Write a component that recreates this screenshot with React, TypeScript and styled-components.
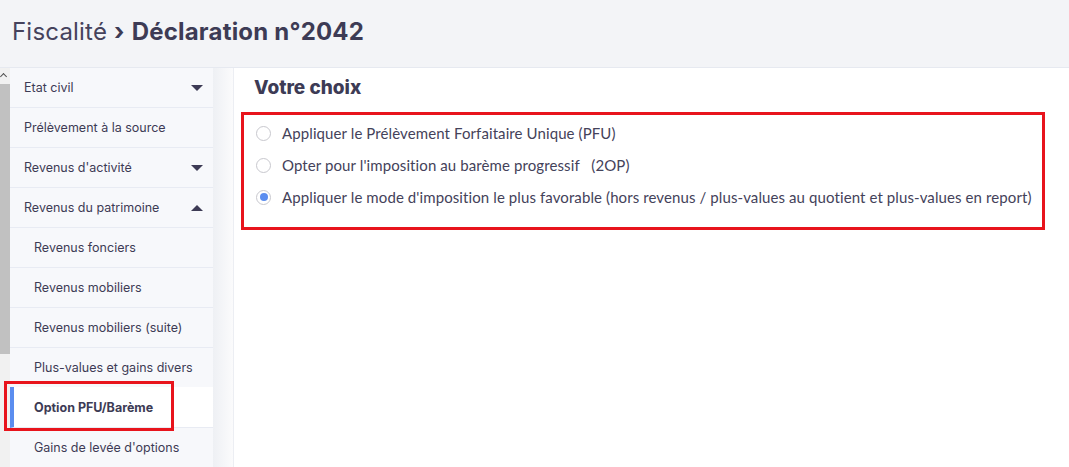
import React from "react";
import styled, { createGlobalStyle, css } from "styled-components";

const GlobalStyle = createGlobalStyle`
  html, body {
    margin: 0;
    padding: 0;
    height: 100%;
    overflow: hidden;
    background: #ffffff;
  }
  * { box-sizing: border-box; }
`;

const ink = "#3d3b55";
const heading = `"Inter", "Noto Sans", sans-serif`;
const body = `"Lato", "Open Sans", sans-serif`;

type Item = { label: string; sub?: boolean; caret?: "down" | "up"; active?: boolean };

const items: Item[] = [
  { label: "Etat civil", caret: "down" },
  { label: "Prélèvement à la source" },
  { label: "Revenus d'activité", caret: "down" },
  { label: "Revenus du patrimoine", caret: "up" },
  { label: "Revenus fonciers", sub: true },
  { label: "Revenus mobiliers", sub: true },
  { label: "Revenus mobiliers (suite)", sub: true },
  { label: "Plus-values et gains divers", sub: true },
  { label: "Option PFU/Barème", sub: true, active: true },
  { label: "Gains de levée d'options", sub: true },
];

const options = [
  { label: "Appliquer le Prélèvement Forfaitaire Unique (PFU)" },
  { label: "Opter pour l'imposition au barème progressif\u00a0\u00a0\u00a0(2OP)" },
  {
    label:
      "Appliquer le mode d'imposition le plus favorable (hors revenus / plus-values au quotient et plus-values en report)",
    checked: true,
  },
];

export default function App() {
  return (
    <>
      <GlobalStyle />
      <Page>
        <Header>
          <Title>
            <Crumb>Fiscalité</Crumb>
            <Sep>›</Sep>
            <Current>Déclaration n°2042</Current>
          </Title>
        </Header>
        <Body>
          <ScrollTrack>
            <ScrollArrow />
            <ScrollThumb />
          </ScrollTrack>
          <Sidebar>
            {items.map((it) => (
              <NavItem key={it.label} $sub={it.sub} $active={it.active}>
                <span>{it.label}</span>
                {it.caret && <Caret $up={it.caret === "up"} />}
                {it.active && <Highlight />}
              </NavItem>
            ))}
          </Sidebar>
          <Gutter />
          <Content>
            <SectionTitle>Votre choix</SectionTitle>
            <OptionBox>
              {options.map((o) => (
                <Option key={o.label}>
                  <Radio $checked={o.checked} />
                  <span>{o.label}</span>
                </Option>
              ))}
            </OptionBox>
          </Content>
        </Body>
      </Page>
    </>
  );
}

const Page = styled.div`
  display: flex;
  flex-direction: column;
  height: 467px;
  color: ${ink};
`;

const Header = styled.header`
  height: 68px;
  flex: none;
  background: #f3f4f7;
  border-bottom: 1px solid #e6e9f0;
  display: flex;
  align-items: center;
  padding: 0 12px 4px;
`;

const Title = styled.h1`
  margin: 0;
  font-family: ${heading};
  font-size: 24px;
  letter-spacing: 0.2px;
  display: flex;
  align-items: baseline;
  gap: 7px;
`;

const Crumb = styled.span`
  font-weight: 400;
  color: #45425c;
`;

const Sep = styled.span`
  font-weight: 700;
`;

const Current = styled.span`
  font-weight: 700;
`;

const Body = styled.div`
  flex: 1;
  display: flex;
  min-height: 0;
  background: #f3f4f7;
`;

const ScrollTrack = styled.div`
  width: 10px;
  flex: none;
  background: #f1f1f1;
  display: flex;
  flex-direction: column;
`;

const ScrollArrow = styled.div`
  height: 16px;
  background: #f1f1f1;
  position: relative;
  &::before {
    content: "";
    position: absolute;
    left: 1px;
    top: 6px;
    width: 4px;
    height: 4px;
    border-left: 1.5px solid #505050;
    border-top: 1.5px solid #505050;
    transform: rotate(45deg);
  }
`;

const ScrollThumb = styled.div`
  height: 270px;
  background: #c1c1c1;
`;

const Sidebar = styled.nav`
  width: 203px;
  flex: none;
  background: #f7f8fb;
  display: flex;
  flex-direction: column;
`;

const NavItem = styled.div<{ $sub?: boolean; $active?: boolean }>`
  position: relative;
  height: 40px;
  flex: none;
  display: flex;
  align-items: center;
  justify-content: space-between;
  padding: 0 10px 0 ${(p) => (p.$sub ? 24 : 14)}px;
  border-bottom: 1px solid #e8ebf3;
  font-family: ${heading};
  font-size: 12.5px;
  color: ${ink};
  ${(p) =>
    p.$active &&
    css`
      background: #ffffff;
      font-weight: 700;
      border-left: 4px solid #5b8def;
      padding-left: 20px;
      margin-top: -1px;
      height: 41px;
    `}
`;

const Caret = styled.span<{ $up?: boolean }>`
  width: 0;
  height: 0;
  border-left: 6px solid transparent;
  border-right: 6px solid transparent;
  ${(p) =>
    p.$up
      ? css`border-bottom: 6px solid #3d3b55;`
      : css`border-top: 6px solid #3d3b55;`}
`;

const Highlight = styled.span`
  position: absolute;
  left: -10px;
  top: -6px;
  width: 170px;
  height: 50px;
  border: 3px solid #e8141c;
  pointer-events: none;
`;

const Gutter = styled.div`
  width: 20px;
  flex: none;
  background: linear-gradient(to right, #eef0f4, #fbfbfc);
`;

const Content = styled.main`
  flex: 1;
  background: #ffffff;
  border-left: 1px solid #eceef3;
  padding: 8px 23px 0 20px;
`;

const SectionTitle = styled.h2`
  margin: 0 0 12px;
  font-family: ${heading};
  font-size: 19px;
  font-weight: 800;
  color: ${ink};
  line-height: 24px;
`;

const OptionBox = styled.div`
  margin-left: -13px;
  width: 804px;
  border: 3px solid #e8141c;
  padding: 2px 12px 14px;
  display: flex;
  flex-direction: column;
`;

const Option = styled.label`
  display: flex;
  align-items: center;
  gap: 11px;
  height: 32px;
  font-family: ${body};
  font-size: 15px;
  letter-spacing: 0.1px;
  color: #44425a;
  white-space: nowrap;
`;

const Radio = styled.span<{ $checked?: boolean }>`
  width: 15px;
  height: 15px;
  flex: none;
  border-radius: 50%;
  border: 1px solid #c8c8ce;
  background: #ffffff;
  position: relative;
  ${(p) =>
    p.$checked &&
    css`
      &::after {
        content: "";
        position: absolute;
        inset: 2.5px;
        border-radius: 50%;
        background: #5b8def;
      }
    `}
`;
